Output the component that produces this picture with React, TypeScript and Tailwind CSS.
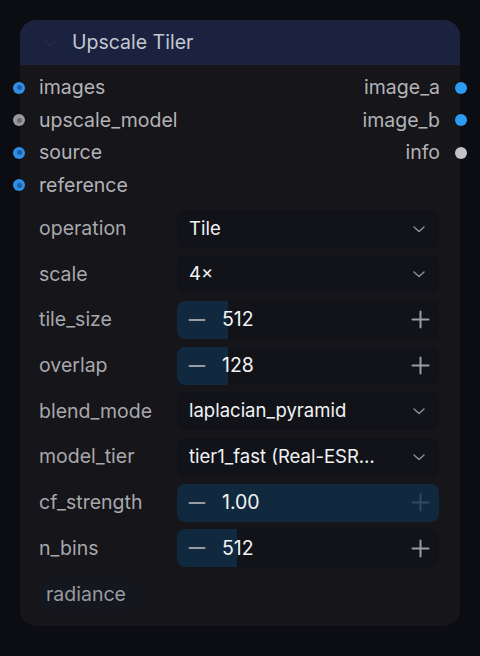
import React from "react";

const font = { fontFamily: "Inter, 'Noto Sans', sans-serif" };

function InDot({ grey }: { grey?: boolean }) {
  return (
    <div
      className={
        "absolute left-[-7px] top-1/2 -translate-y-1/2 w-[12px] h-[12px] rounded-full flex items-center justify-center " +
        (grey ? "bg-[#9a9a9c]" : "bg-[#2f8ee6]")
      }
    >
      <div className={"w-[5px] h-[5px] rounded-full " + (grey ? "bg-[#6a6a6c]" : "bg-[#1b5ea6]")} />
    </div>
  );
}

function OutDot({ grey }: { grey?: boolean }) {
  return (
    <div
      className={
        "absolute right-[-7px] top-1/2 -translate-y-1/2 w-[12px] h-[12px] rounded-full " +
        (grey ? "bg-[#c4c4c4]" : "bg-[#2b9bf4]")
      }
    />
  );
}

function Chevron() {
  return (
    <svg width="16" height="16" viewBox="0 0 16 16" fill="none" stroke="#8a8d94" strokeWidth="1.5" strokeLinecap="round" strokeLinejoin="round">
      <path d="M3 6 L8 10.5 L13 6" />
    </svg>
  );
}

function Minus() {
  return (
    <svg width="18" height="18" viewBox="0 0 18 18" stroke="#9a9ca2" strokeWidth="2" strokeLinecap="round">
      <path d="M1.5 9 H16.5" />
    </svg>
  );
}

function Plus({ dim }: { dim?: boolean }) {
  return (
    <svg width="19" height="19" viewBox="0 0 19 19" stroke={dim ? "#2f4a62" : "#9a9ca2"} strokeWidth="2" strokeLinecap="round">
      <path d="M1.5 9.5 H17.5 M9.5 1.5 V17.5" />
    </svg>
  );
}

function SelectW({ value }: { value: string }) {
  return (
    <div className="w-[262px] h-[38px] rounded-[8px] bg-[#111318] flex items-center pl-[12px] pr-[12px]">
      <span className="flex-1 text-[#f2f3f5] text-[18.5px] truncate">{value}</span>
      <Chevron />
    </div>
  );
}

function NumberW({ value, fill }: { value: string; fill: number }) {
  const full = fill >= 1;
  return (
    <div className="relative w-[262px] h-[38px] rounded-[8px] bg-[#111318] overflow-hidden">
      <div
        className="absolute left-0 top-0 bottom-0 bg-[#10293f]"
        style={{ width: `${fill * 100}%` }}
      />
      <div className="relative flex items-center h-full pl-[11px] pr-[9px]">
        <Minus />
        <span className="ml-[16px] flex-1 text-[#f2f3f5] text-[19.5px]">{value}</span>
        <Plus dim={full} />
      </div>
    </div>
  );
}

function WidgetRow({ label, children }: { label: string; children: React.ReactNode }) {
  return (
    <div className="flex items-center h-[38px]">
      <span className="w-[138px] text-[#a7a8ad] text-[19.5px]">{label}</span>
      {children}
    </div>
  );
}

export default function App() {
  return (
    <div className="w-[480px] h-[656px] bg-[#0b0d12] pt-[20px] px-[20px]" style={font}>
      <div className="w-[440px] h-[606px] rounded-[16px] bg-[#161519] flex flex-col">
        <div className="h-[45px] rounded-t-[16px] bg-[#1b2240] flex items-center pl-[22px]">
          <svg width="16" height="16" viewBox="0 0 16 16" fill="none" stroke="#262d4a" strokeWidth="1.5">
            <path d="M3 6 L8 10.5 L13 6" />
          </svg>
          <span className="ml-[14px] text-[19.5px] text-[#c3c7d3]">Upscale Tiler</span>
        </div>
        <div className="pt-[6.5px] flex flex-col">
          {[
            ["images", "image_a", false, false],
            ["upscale_model", "image_b", true, false],
            ["source", "info", false, true],
            ["reference", "", false, false],
          ].map(([l, r, lg, rg], i) => (
            <div key={i} className="relative h-[32.5px] flex items-center">
              <InDot grey={lg as boolean} />
              <span className="ml-[19px] flex-1 text-[19.5px] text-[#b2b3b8]">{l as string}</span>
              {r ? (
                <>
                  <span className="mr-[20px] text-[19.5px] text-[#b2b3b8]">{r as string}</span>
                  <OutDot grey={rg as boolean} />
                </>
              ) : null}
            </div>
          ))}
        </div>
        <div className="mt-[8px] pl-[19px] flex flex-col gap-[7.7px]">
          <WidgetRow label="operation"><SelectW value="Tile" /></WidgetRow>
          <WidgetRow label="scale"><SelectW value="4×" /></WidgetRow>
          <WidgetRow label="tile_size"><NumberW value="512" fill={0.195} /></WidgetRow>
          <WidgetRow label="overlap"><NumberW value="128" fill={0.195} /></WidgetRow>
          <WidgetRow label="blend_mode"><SelectW value="laplacian_pyramid" /></WidgetRow>
          <WidgetRow label="model_tier"><SelectW value="tier1_fast (Real-ESR…" /></WidgetRow>
          <WidgetRow label="cf_strength"><NumberW value="1.00" fill={1} /></WidgetRow>
          <WidgetRow label="n_bins"><NumberW value="512" fill={0.23} /></WidgetRow>
        </div>
        <div className="mt-[10px] pl-[18px]">
          <div className="inline-flex items-center h-[34px] pl-[8px] pr-[12px] rounded-[12px] bg-[#14171d] text-[19.5px] text-[#9a9ba0]">
            radiance
          </div>
        </div>
      </div>
    </div>
  );
}
